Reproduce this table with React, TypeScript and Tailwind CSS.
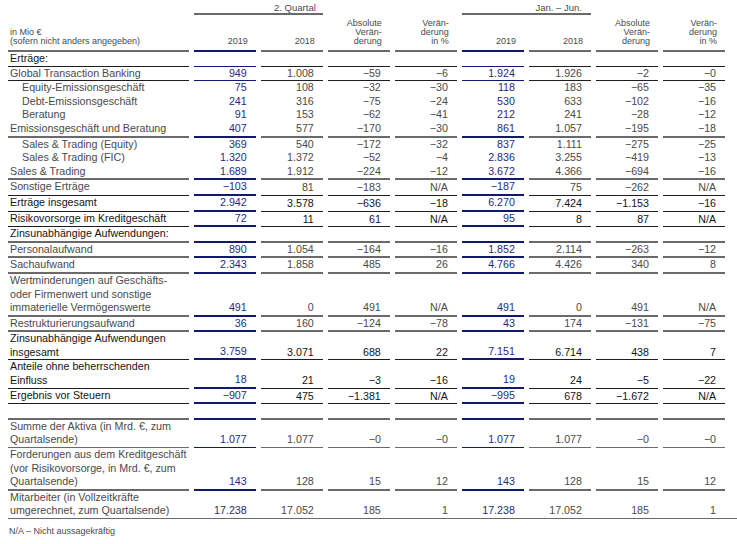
type Line = 'none' | 'thin' | 'thick' | 'gray' | 'full';

type Row = {
  label: string[];
  vals?: string[];
  indent?: boolean;
  strong?: boolean;
  line: Line;
  blue?: 'thin' | 'thick';
};

const rows: Row[] = [
  { label: ['Erträge:'], strong: true, line: 'thin', blue: 'thin' },
  { label: ['Global Transaction Banking'], vals: ['949', '1.008', '−59', '−6', '1.924', '1.926', '−2', '−0'], line: 'thin', blue: 'thin' },
  { label: ['Equity-Emissionsgeschäft'], indent: true, vals: ['75', '108', '−32', '−30', '118', '183', '−65', '−35'], line: 'none' },
  { label: ['Debt-Emissionsgeschäft'], indent: true, vals: ['241', '316', '−75', '−24', '530', '633', '−102', '−16'], line: 'none' },
  { label: ['Beratung'], indent: true, vals: ['91', '153', '−62', '−41', '212', '241', '−28', '−12'], line: 'none' },
  { label: ['Emissionsgeschäft und Beratung'], vals: ['407', '577', '−170', '−30', '861', '1.057', '−195', '−18'], line: 'thick', blue: 'thick' },
  { label: ['Sales & Trading (Equity)'], indent: true, vals: ['369', '540', '−172', '−32', '837', '1.111', '−275', '−25'], line: 'none' },
  { label: ['Sales & Trading (FIC)'], indent: true, vals: ['1.320', '1.372', '−52', '−4', '2.836', '3.255', '−419', '−13'], line: 'none' },
  { label: ['Sales & Trading'], vals: ['1.689', '1.912', '−224', '−12', '3.672', '4.366', '−694', '−16'], line: 'thick', blue: 'thick' },
  { label: ['Sonstige Erträge'], vals: ['−103', '81', '−183', 'N/A', '−187', '75', '−262', 'N/A'], line: 'thin', blue: 'thick' },
  { label: ['Erträge insgesamt'], strong: true, vals: ['2.942', '3.578', '−636', '−18', '6.270', '7.424', '−1.153', '−16'], line: 'thin', blue: 'thick' },
  { label: ['Risikovorsorge im Kreditgeschäft'], strong: true, vals: ['72', '11', '61', 'N/A', '95', '8', '87', 'N/A'], line: 'thin', blue: 'thick' },
  { label: ['Zinsunabhängige Aufwendungen:'], strong: true, line: 'thick', blue: 'thick' },
  { label: ['Personalaufwand'], vals: ['890', '1.054', '−164', '−16', '1.852', '2.114', '−263', '−12'], line: 'thick', blue: 'thick' },
  { label: ['Sachaufwand'], vals: ['2.343', '1.858', '485', '26', '4.766', '4.426', '340', '8'], line: 'thick', blue: 'thick' },
  {
    label: ['Wertminderungen auf Geschäfts-', 'oder Firmenwert und sonstige', 'immaterielle Vermögenswerte'],
    vals: ['491', '0', '491', 'N/A', '491', '0', '491', 'N/A'],
    line: 'thick',
    blue: 'thick',
  },
  { label: ['Restrukturierungsaufwand'], vals: ['36', '160', '−124', '−78', '43', '174', '−131', '−75'], line: 'thick', blue: 'thick' },
  { label: ['Zinsunabhängige Aufwendungen', 'insgesamt'], strong: true, vals: ['3.759', '3.071', '688', '22', '7.151', '6.714', '438', '7'], line: 'thin', blue: 'thick' },
  { label: ['Anteile ohne beherrschenden', 'Einfluss'], strong: true, vals: ['18', '21', '−3', '−16', '19', '24', '−5', '−22'], line: 'thin', blue: 'thick' },
  { label: ['Ergebnis vor Steuern'], strong: true, vals: ['−907', '475', '−1.381', 'N/A', '−995', '678', '−1.672', 'N/A'], line: 'thin', blue: 'thick' },
  { label: [''], line: 'thick', blue: 'thick' },
  { label: ['Summe der Aktiva (in Mrd. €, zum', 'Quartalsende)'], vals: ['1.077', '1.077', '−0', '−0', '1.077', '1.077', '−0', '−0'], line: 'gray', blue: 'thin' },
  {
    label: ['Forderungen aus dem Kreditgeschäft', '(vor Risikovorsorge, in Mrd. €, zum', 'Quartalsende)'],
    vals: ['143', '128', '15', '12', '143', '128', '15', '12'],
    line: 'thick',
    blue: 'thick',
  },
  { label: ['Mitarbeiter (in Vollzeitkräfte', 'umgerechnet, zum Quartalsende)'], vals: ['17.238', '17.052', '185', '1', '17.238', '17.052', '185', '1'], line: 'full' },
];

const grid = 'grid grid-cols-[180.7px_repeat(8,61.75px)] gap-x-[5.3px]';

const lineCls: Record<Line, string> = {
  none: '',
  thin: 'border-b border-[#1e1e1e]',
  thick: 'border-b-2 border-[#6a6a6a]',
  gray: 'border-b border-[#6a6a6a]',
  full: '',
};

function cellLine(row: Row, blueCol: boolean) {
  if (blueCol && row.blue === 'thick') return 'border-b-2 border-[#0f1a6e]';
  if (blueCol && row.blue === 'thin') return 'border-b border-[#0f1a6e]';
  return lineCls[row.line];
}

function Header() {
  const h = 'text-[9px] leading-[9px] text-[#4a4a4a]';
  return (
    <div className={h}>
      <div className={grid}>
        <div />
        <div className="col-span-2 border-b-2 border-[#6a6a6a] pt-[3px] pb-[1px] pr-[7px] text-right text-[9.5px]">2. Quartal</div>
        <div />
        <div />
        <div className="col-span-2 border-b-2 border-[#6a6a6a] pt-[3px] pb-[1px] pr-[9px] text-right text-[9.5px]">Jan. – Jun.</div>
      </div>
      <div className={grid}>
        <div className="flex h-[37px] flex-col justify-end border-b-2 border-[#6a6a6a] pb-[4px] pl-[2px]">
          <span>in Mio €</span>
          <span>(sofern nicht anders angegeben)</span>
        </div>
        {[0, 1].map((p) => (
          <HeaderGroup key={p} />
        ))}
      </div>
    </div>
  );
}

function HeaderGroup() {
  const c = 'flex h-[37px] flex-col items-end justify-end pb-[4px] pr-[8px] text-right';
  return (
    <>
      <div className={`${c} border-b-2 border-[#0f1a6e]`}>2019</div>
      <div className={`${c} border-b-2 border-[#6a6a6a]`}>2018</div>
      <div className={`${c} border-b-2 border-[#6a6a6a]`}>
        <span>Absolute</span>
        <span>Verän-</span>
        <span>derung</span>
      </div>
      <div className={`${c} border-b-2 border-[#6a6a6a]`}>
        <span>Verän-</span>
        <span>derung</span>
        <span>in %</span>
      </div>
    </>
  );
}

function TableRow({ row }: { row: Row }) {
  const txt = row.strong ? 'text-[#141414]' : 'text-[#4a4a4a]';
  const vals = row.vals ?? ['', '', '', '', '', '', '', ''];
  return (
    <div className={`${grid} ${row.line === 'full' ? 'border-b border-[#6a6a6a]' : ''}`}>
      <div className={`${cellLine(row, false)} ${txt} ${row.indent ? 'pl-[14px]' : 'pl-[2px]'} min-h-[13.6px]`}>
        {row.label.map((l, i) => (
          <div key={i}>{l || '\u00a0'}</div>
        ))}
      </div>
      {vals.map((v, i) => {
        const blue = i === 0 || i === 4;
        return (
          <div
            key={i}
            className={`flex items-end justify-end pr-[9px] ${cellLine(row, blue)} ${blue ? 'text-[#1f2a84]' : txt}`}
          >
            {v}
          </div>
        );
      })}
    </div>
  );
}

export default function App() {
  return (
    <div className="h-[544px] w-[737px] bg-white pl-[8px] font-['Liberation_Sans',Arial,sans-serif]">
      <Header />
      <div className="text-[10.7px] leading-[13.6px]">
        {rows.map((r, i) => (
          <TableRow key={i} row={r} />
        ))}
      </div>
      <div className="pl-[1px] pt-[6px] text-[9px] text-[#4a4a4a]">N/A – Nicht aussagekräftig</div>
    </div>
  );
}
